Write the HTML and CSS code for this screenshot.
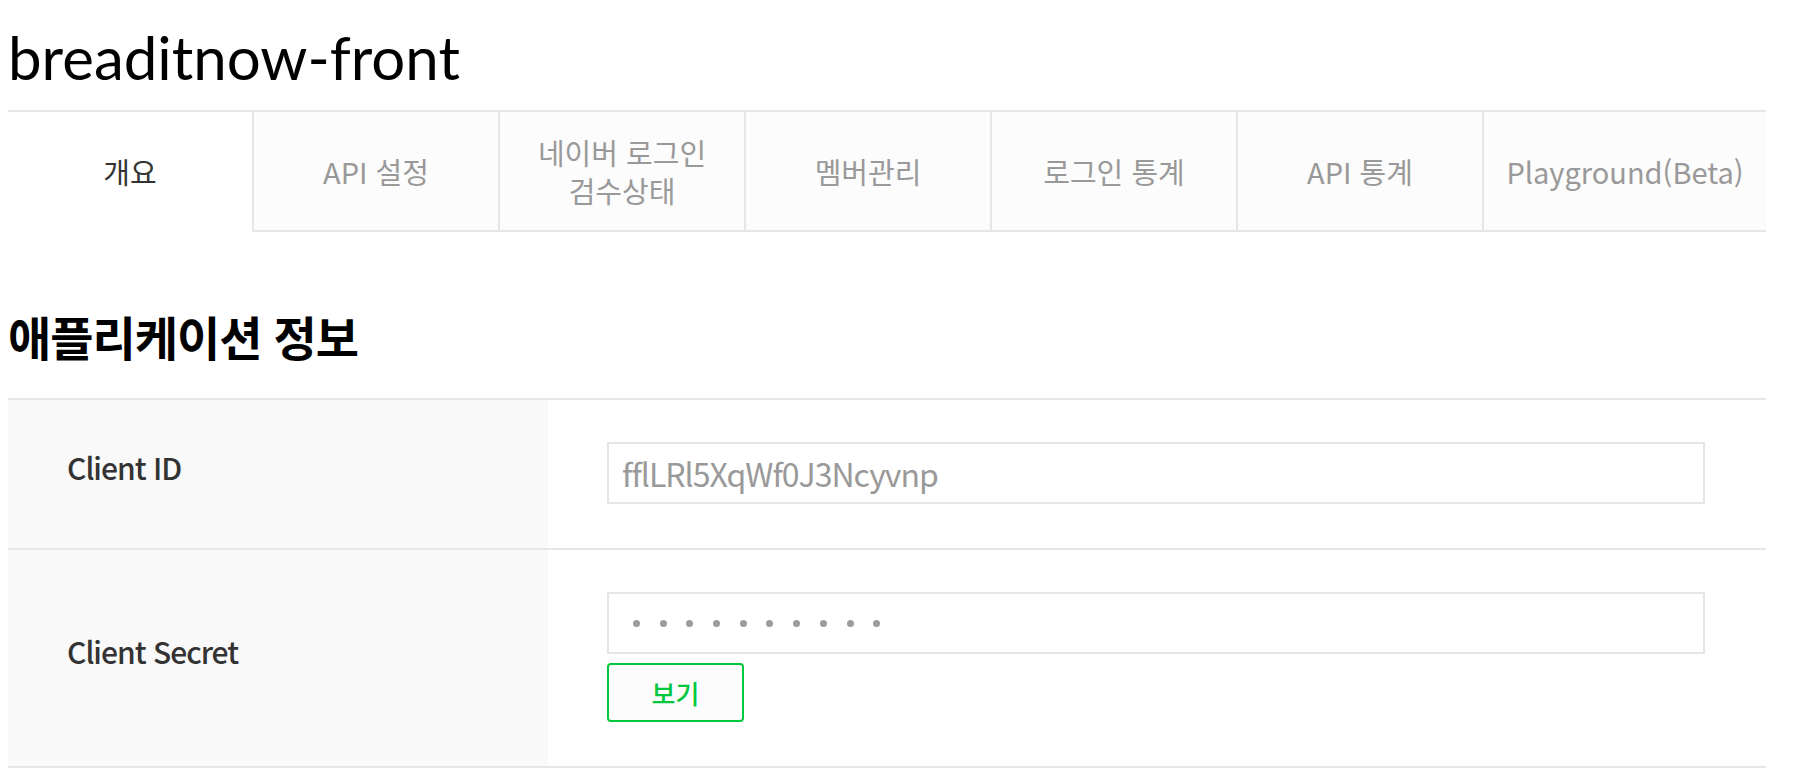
FILE: index.html
```html
<!DOCTYPE html>
<html lang="ko">
<head>
<meta charset="utf-8">
<title>breaditnow-front</title>
<link rel="stylesheet" href="styles.css">
</head>
<body>
<div class="page">
  <h1 class="app-title">breaditnow-front</h1>
  <nav class="tabs">
    <a class="tab is-active">개요</a>
    <a class="tab">API 설정</a>
    <a class="tab">네이버 로그인<br>검수상태</a>
    <a class="tab">멤버관리</a>
    <a class="tab">로그인 통계</a>
    <a class="tab">API 통계</a>
    <a class="tab">Playground(Beta)</a>
  </nav>
  <h2 class="section-title">애플리케이션 정보</h2>
  <table class="info-table">
    <tr>
      <th>Client ID</th>
      <td><div class="field">fflLRl5XqWf0J3Ncyvnp</div></td>
    </tr>
    <tr>
      <th>Client Secret</th>
      <td>
        <div class="field secret" aria-label="hidden secret">
          <span class="dot"></span><span class="dot"></span><span class="dot"></span><span class="dot"></span><span class="dot"></span><span class="dot"></span><span class="dot"></span><span class="dot"></span><span class="dot"></span><span class="dot"></span>
        </div>
        <button class="btn-view" type="button">보기</button>
      </td>
    </tr>
  </table>
</div>
</body>
</html>
```

FILE: styles.css
```css
html, body {
  margin: 0;
  padding: 0;
  background: #fff;
}

body {
  font-family: "Noto Sans CJK KR", "Noto Sans", sans-serif;
  color: #333;
}

.page {
  width: 1758px;
  padding: 21px 8px 0;
}

.app-title {
  margin: 0;
  font-family: Lato, "Noto Sans", sans-serif;
  font-weight: 400;
  font-size: 60px;
  line-height: 72px;
  color: #000;
}

.tabs {
  display: grid;
  grid-template-columns: 244px repeat(5, 246px) 1fr;
  margin-top: 17px;
  border-top: 2px solid #e6e6e6;
}

.tab {
  box-sizing: border-box;
  height: 120px;
  display: flex;
  align-items: center;
  justify-content: center;
  text-align: center;
  font-size: 29px;
  line-height: 38px;
  color: #999;
  background: #fcfcfc;
  border-left: 2px solid #e6e6e6;
  border-bottom: 2px solid #e6e6e6;
  text-decoration: none;
}

.tab.is-active {
  background: #fff;
  border-left: 0;
  border-bottom-color: transparent;
  color: #333;
}

.section-title {
  margin: 77px 0 36px;
  font-size: 47px;
  line-height: 53px;
  letter-spacing: -1px;
  font-weight: 700;
  color: #000;
}

.info-table {
  width: 100%;
  border-collapse: separate;
  border-spacing: 0;
  border-top: 2px solid #e6e6e6;
}

.info-table th,
.info-table td {
  border-bottom: 2px solid #e6e6e6;
}

.info-table th {
  width: 481px;
  padding: 0 0 14px 59px;
  text-align: left;
  vertical-align: middle;
  background: #f9f9f9;
  font-size: 30px;
  font-weight: 500;
  letter-spacing: -1px;
  color: #333;
}

.info-table td {
  padding: 42px 61px 44px 59px;
  vertical-align: top;
  background: #fff;
}

.field {
  box-sizing: border-box;
  height: 62px;
  display: flex;
  align-items: center;
  padding: 0 13px;
  border: 2px solid #e6e6e6;
  background: #fff;
  font-size: 32px;
  letter-spacing: -1px;
  color: #999;
}

.field.secret {
  padding-left: 24px;
  gap: 19.7px;
}

.dot {
  width: 7px;
  height: 7px;
  border-radius: 50%;
  background: #9c9c9c;
}

.btn-view {
  display: block;
  box-sizing: border-box;
  margin-top: 9px;
  width: 137px;
  height: 59px;
  padding: 0;
  border: 2px solid #00c73c;
  border-radius: 4px;
  background: #fcfcfc;
  color: #00c73c;
  font-family: "Noto Sans CJK KR", sans-serif;
  font-size: 26px;
  font-weight: 500;
}
```
